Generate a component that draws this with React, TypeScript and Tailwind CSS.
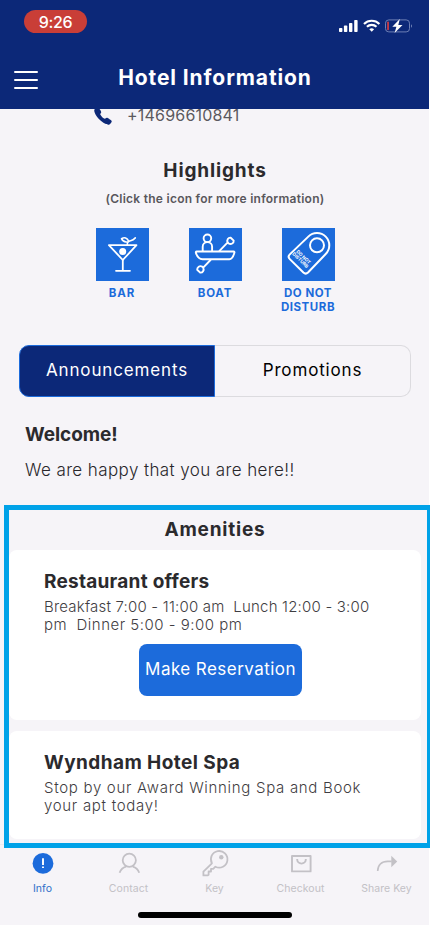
import clsx from 'clsx'
import type { ReactNode } from 'react'
import { IoCall } from 'react-icons/io5'

const highlights = [
  { id: 'bar', label: <span className="tracking-[1px]">BAR</span>, icon: <BarIcon /> },
  { id: 'boat', label: <span className="tracking-[0.8px]">BOAT</span>, icon: <BoatIcon /> },
  {
    id: 'dnd',
    label: (
      <span className="tracking-[0.55px]">
        DO NOT
        <br />
        DISTURB
      </span>
    ),
    icon: <DoorHangerIcon />,
  },
]

const tabs = [
  { label: 'Info', icon: <InfoIcon />, active: true },
  { label: 'Contact', icon: <ContactIcon /> },
  { label: 'Key', icon: <KeyIcon /> },
  { label: 'Checkout', icon: <CheckoutIcon /> },
  { label: 'Share Key', icon: <ShareIcon /> },
]

function BarIcon() {
  return (
    <svg viewBox="0 0 53 53" className="size-full" fill="none" stroke="white" strokeWidth="1.8" strokeLinecap="round" strokeLinejoin="round">
      <path d="M12.9 17.2H40.5L26.8 32Z" />
      <path d="M26.8 32v10.6M20 42.8h14" />
      <circle cx="26.7" cy="23.6" r="3.5" fill="white" stroke="none" />
      <path d="M31.2 17c-.2-1.5.2-2.6 1.6-3.6C31 9.6 28.5 9 25.5 10.7c1.5 3 4.5 3.8 7.3 2.7 2.2-1 3.7-.4 6.5-3.5" strokeWidth="1.6" />
    </svg>
  )
}

function BoatIcon() {
  return (
    <svg viewBox="0 0 53 53" className="size-full" fill="none" stroke="white" strokeWidth="1.9" strokeLinecap="round" strokeLinejoin="round">
      <circle cx="18.4" cy="10.3" r="3.8" />
      <path d="M13.7 23v-4.2a4.7 4.7 0 0 1 9.4 0V23" />
      <path d="M7.6 23.5h37c.8 0 1 .7.8 1.3-1 3.5-2.3 6.4-5 6.4H13.5c-4 0-5.5-3-6.6-6.3-.2-.7 0-1.4.7-1.4Z" />
      <path d="M30.5 22.8l8.2-8.4M38.7 14.4c-1.2-2.5.5-5 3-4.7l3 2.9c.2 2.6-2.5 4.2-5 2.9Z" />
      <path d="M21.5 32l-7.3 7.6M14.2 39.6c1.2 2.5-.5 5.3-3 5l-3-2.9c-.2-2.6 2.5-4.4 5-3.1Z" />
    </svg>
  )
}

function DoorHangerIcon() {
  return (
    <svg viewBox="0 0 53 53" className="size-full" fill="none" stroke="white" strokeWidth="2" strokeLinejoin="round">
      <path d="M26.3 8.6 7.8 26.4c-1.7 1.7-1.7 3 0 4.7l13.6 13.4c1.6 1.5 3 1.5 4.6 0L43.7 26A12.3 12.3 0 0 0 26.3 8.6Z" />
      <circle cx="35" cy="17.3" r="7" />
      <g transform="translate(20 30.500) rotate(44)" fill="white" stroke="none" className="font-bold" fontSize="4.6" textAnchor="middle">
        <text y="-0.5">DO NOT</text>
        <text y="3.9">DISTURB</text>
      </g>
    </svg>
  )
}

function InfoIcon() {
  return (
    <svg viewBox="0 0 28 28" className="size-7">
      <circle cx="14" cy="14.4" r="10.4" fill="#1c6bdb" />
      <path d="M14 9.3v6.6M14 17.4v1.7" stroke="white" strokeWidth="1.9" />
    </svg>
  )
}

function ContactIcon() {
  return (
    <svg viewBox="0 0 28 28" className="size-7" fill="none" stroke="currentColor" strokeWidth="1.8">
      <circle cx="14.3" cy="11.3" r="6.6" />
      <path d="M4.6 23.8c1.2-3.3 3.6-5.4 6.4-6.1M24.2 23.8c-1.2-3.3-3.6-5.4-6.4-6.1" />
    </svg>
  )
}

function KeyIcon() {
  return (
    <svg viewBox="0 0 28 28" className="size-7" fill="none" stroke="currentColor" strokeWidth="1.8" strokeLinejoin="round">
      <path d="M10.9 14.3a8.3 8.3 0 1 1 3.5 3.4l-2.2 2.2H10v2.6H7.6v3.3L6.800 26.400H2.400v-3.700Z" />
      <circle cx="20.3" cy="8.2" r="2.2" fill="currentColor" stroke="none" />
    </svg>
  )
}

function CheckoutIcon() {
  return (
    <svg viewBox="0 0 28 28" className="size-7" fill="none" stroke="currentColor" strokeWidth="1.9" strokeLinejoin="round">
      <rect x="5" y="7" width="18.6" height="15.4" />
      <path d="M10.2 10v.6a4.3 4 0 0 0 8.600 0V10" />
    </svg>
  )
}

function ShareIcon() {
  return (
    <svg viewBox="0 0 28 28" className="size-7" fill="none" stroke="currentColor" strokeWidth="1.6">
      <path d="M4.7 22c.2-6 4-9.600 10-9.600h4" />
      <path d="M18.3 6.700l5.900 5.700-5.900 5.900Z" fill="currentColor" stroke="none" />
    </svg>
  )
}

function StatusIcons() {
  return (
    <svg viewBox="0 0 76 14" className="mt-[19px] h-[14px] w-[76px]" fill="white">
      <rect x="1" y="9" width="3.4" height="4" rx="0.8" />
      <rect x="5.9" y="6.6" width="3.4" height="6.4" rx="0.8" />
      <rect x="11" y="4" width="3.4" height="9" rx="0.8" />
      <rect x="16.2" y="1" width="3.4" height="12" rx="0.8" />
      <g fill="none" stroke="white" strokeWidth="2.1">
        <path d="M26 4.9a11 11 0 0 1 15.4 0" />
        <path d="M28.9 7.8a7 7 0 0 1 9.6 0" />
      </g>
      <path d="M33.7 12.8l-2.4-2.6a3.6 3.6 0 0 1 4.8 0Z" />
      <rect x="47.5" y="0.9" width="24" height="12" rx="3.3" fill="none" stroke="#6d7fb4" />
      <path d="M73 5.2c1.4.5 1.4 3 0 3.5Z" fill="#6d7fb4" />
      <rect x="49.2" y="2.6" width="1.7" height="8.6" rx="0.8" fill="#d83b40" />
      <path d="M61.8 0l-7.5 7.7h4.1l-1.8 6.3 7.9-8h-4.2Z" />
    </svg>
  )
}

function Card({ title, className, children }: { title: ReactNode; className?: string; children: ReactNode }) {
  return (
    <div className={clsx('mr-[6px] rounded-lg bg-white pt-[21px] pl-[35px]', className)}>
      <h3 className="text-[19px] leading-[21px] font-bold text-[#2b2a2d]">{title}</h3>
      {children}
    </div>
  )
}

export default function App() {
  return (
    <div className="flex h-[925px] w-[429px] flex-col bg-[#f6f4f8] font-['Inter',sans-serif] whitespace-nowrap">
      <header className="relative z-10 h-[109px] shrink-0 bg-[#0c2878] text-white">
        <div className="flex h-[66px] items-start justify-between pr-[15px] pl-6">
          <div className="mt-[10px] flex h-[23px] w-[63px] items-center justify-center rounded-full bg-[#c93e37] text-base leading-none font-medium tracking-[-0.3px]">
            9:26
          </div>
          <StatusIcons />
        </div>
        <div className="grid grid-cols-[1fr_auto_1fr] items-start pl-[14px]">
          <div className="mt-[5px] flex w-6 flex-col gap-[6px]">
            <span className="h-[2px] rounded bg-white" />
            <span className="h-[2px] rounded bg-white" />
            <span className="h-[2px] rounded bg-white" />
          </div>
          <h1 className="mt-px -ml-[13px] text-[21px] leading-[22px] font-bold tracking-[0.9px]">Hotel Information</h1>
        </div>
      </header>

      <main className="flex flex-col">
        <div className="flex h-[13px] items-center gap-[14px] pl-[93px] text-[#5b595e]">
          <IoCall className="size-5 shrink-0 text-[#0c2878]" />
          <span className="leading-[13px] tracking-[0.2px]">+14696610841</span>
        </div>

        <h2 className="mt-[38px] pl-px text-center text-[19px] leading-[21px] font-bold tracking-[0.85px] text-[#2b2a2d]">
          Highlights
        </h2>
        <p className="mt-[10px] pl-px text-center text-[12px] leading-4 font-semibold tracking-[0.26px] text-[#59575c]">
          (Click the icon for more information)
        </p>
        <div className="mt-[21px] flex justify-center pl-px">
          {highlights.map((item) => (
            <div key={item.id} className="flex w-[93px] flex-col items-center">
              <div className="h-[53px] w-[53px] bg-[#1c6bdb]">{item.icon}</div>
              <div className="mt-[5px] text-center text-[11.5px] leading-[14px] font-bold text-[#1c6bdb]">
                {item.label}
              </div>
            </div>
          ))}
        </div>

        <div className="mx-[19px] mt-[31px] flex h-[52px] w-[392px] text-[17px]">
          <button className="w-[196px] rounded-l-[10px] border border-[#1c6bdb] bg-[#0c2878] tracking-[0.85px] text-white">
            Announcements
          </button>
          <button className="w-[196px] rounded-r-[10px] border border-l-0 border-[#dcdbdf] tracking-[0.85px] text-black">
            Promotions
          </button>
        </div>

        <div className="mt-[27px] pl-[25px]">
          <h3 className="text-[19px] leading-[21px] font-bold tracking-[-0.05px] text-[#2b2a2d]">Welcome!</h3>
          <p className="mt-[15px] text-[17px] leading-5 font-light tracking-[0.4px] text-[#29272b]">
            We are happy that you are here!!
          </p>
        </div>
      </main>

      <section className="relative z-10 mt-[25px] ml-1 h-[343px] w-[426px] shrink-0 border-[5px] border-r-[3px] border-[#00a2e8] bg-[#f6f4f8]">
        <h2 className="mt-[9px] mb-[10px] pr-[6px] text-center text-[19px] leading-[21px] font-bold tracking-[0.8px] text-[#2b2a2d]">
          Amenities
        </h2>
        <Card title={<span className="tracking-[0.25px]">Restaurant offers</span>} className="h-[170px]">
          <p className="mt-[6px] text-[15px] leading-[18px] font-light text-[#3f3d42]">
            <span className="tracking-[0.2px]">Breakfast 7:00 - 11:00 am&nbsp; Lunch 12:00 - 3:00</span>
            <br />
            <span className="tracking-[0.5px]">pm&nbsp; Dinner 5:00 - 9:00 pm</span>
          </p>
          <button className="mt-[10px] ml-[95px] h-[52px] w-[163px] rounded-lg bg-[#1c6bdb] text-[17px] tracking-[0.45px] text-white">
            Make Reservation
          </button>
        </Card>
        <Card title={<span className="tracking-[0.43px]">Wyndham Hotel Spa</span>} className="mt-[11px] h-[108px]">
          <p className="mt-[6px] text-[15px] leading-[18px] font-light tracking-[0.7px] text-[#3f3d42]">
            Stop by our Award Winning Spa and Book
            <br />
            your apt today!
          </p>
        </Card>
      </section>

      <nav className="-mt-1 flex h-[81px] shrink-0 flex-col items-center border-t border-[#eceaee] pt-1">
        <div className="flex w-[430px]">
          {tabs.map((tab) => (
            <div
              key={tab.label}
              className={clsx('flex flex-1 flex-col items-center', tab.active ? 'text-[#2f6fc9]' : 'text-[#c3c1c6]')}
            >
              {tab.icon}
              <span className="mt-[6px] text-[10.5px] leading-3 tracking-[0.05px]">{tab.label}</span>
            </div>
          ))}
        </div>
        <div className="mt-[17px] h-[6px] w-[154px] rounded-full bg-black" />
      </nav>
    </div>
  )
}
